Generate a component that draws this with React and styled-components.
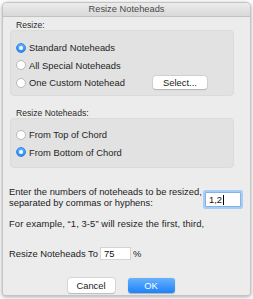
import React from "react";
import styled, { createGlobalStyle } from "styled-components";

const Global = createGlobalStyle`
  html, body {
    margin: 0;
    padding: 0;
    background: #ffffff;
  }
  body {
    font-family: "Liberation Sans", Arial, sans-serif;
    font-size: 9.4px;
    line-height: 11px;
    color: #222;
  }
`;

const Page = styled.div`
  width: 253px;
  height: 299px;
  padding: 2px 0 0 2px;
  box-sizing: border-box;
`;

const Window = styled.div`
  width: 249px;
  height: 294px;
  box-sizing: border-box;
  background: #ececec;
  border: 1px solid #c4c4c4;
  border-radius: 5px 5px 3px 3px;
  box-shadow: 0 1px 4px rgba(0, 0, 0, 0.35);
  display: flex;
  flex-direction: column;
  overflow: hidden;
`;

const TitleBar = styled.div`
  height: 13px;
  flex: none;
  background: linear-gradient(#ececec, #d8d8d8);
  border-bottom: 1px solid #c2c2c2;
  display: flex;
  align-items: center;
  justify-content: center;
  color: #4a4a4a;
  font-size: 9.3px;
`;

const Body = styled.div`
  padding: 0 16px 0 7px;
  display: flex;
  flex-direction: column;
`;

const GroupLabel = styled.div`
  font-size: 8.6px;
  color: #2a2a2a;
  margin: ${(p) => p.$top}px 0 0 6px;
  line-height: 10px;
`;

const Group = styled.div`
  height: ${(p) => p.$h}px;
  box-sizing: border-box;
  background: #e2e2e2;
  border: 1px solid #dbdbdb;
  border-radius: 4px;
  padding: ${(p) => p.$pad}px 0 0 5px;
  display: flex;
  flex-direction: column;
  gap: 6.5px;
`;

const Row = styled.div`
  display: flex;
  align-items: center;
  height: 11px;
`;

const Radio = styled.span`
  width: 10px;
  height: 10px;
  box-sizing: border-box;
  border-radius: 50%;
  flex: none;
  margin-right: 3px;
  display: flex;
  align-items: center;
  justify-content: center;
  background: ${(p) => (p.$on ? "linear-gradient(#5eaefd, #2a8bfb)" : "#fff")};
  border: 1px solid ${(p) => (p.$on ? "#2e86ec" : "#b9b9b9")};
  &::after {
    content: "";
    display: ${(p) => (p.$on ? "block" : "none")};
    width: 4px;
    height: 4px;
    border-radius: 50%;
    background: #fff;
  }
`;

const Label = styled.span`
  color: #1f1f1f;
  white-space: nowrap;
`;

const SmallButton = styled.div`
  margin-left: auto;
  margin-right: 26px;
  width: 54px;
  height: 13px;
  box-sizing: border-box;
  background: #fff;
  border-radius: 3px;
  box-shadow: 0 0 0 0.5px #c2c2c2, 0 0.5px 1px rgba(0, 0, 0, 0.25);
  display: flex;
  align-items: center;
  justify-content: center;
  color: #222;
`;

const Prompt = styled.div`
  margin: 18px 0 0 -1px;
  display: flex;
  align-items: flex-start;
`;

const PromptText = styled.div`
  white-space: nowrap;
`;

const Field = styled.div`
  width: ${(p) => p.$w}px;
  height: ${(p) => p.$h}px;
  box-sizing: border-box;
  background: #fff;
  border: 1px solid #d4d4d4;
  display: flex;
  align-items: center;
  padding-left: 3px;
  color: #111;
  flex: none;
`;

const FocusField = styled(Field)`
  margin-left: auto;
  margin-right: -7px;
  margin-top: 6px;
  border: 1px solid #86b3e6;
  box-shadow: 0 0 0 2px #a8cdf5;
  border-radius: 1px;
`;

const Caret = styled.span`
  display: inline-block;
  width: 1px;
  height: 10px;
  background: #000;
  margin-left: 0.5px;
`;

const Example = styled.div`
  margin: 10px 0 0 -1px;
  white-space: nowrap;
  letter-spacing: 0.1px;
`;

const SizeRow = styled.div`
  margin: 18px 0 0 -1px;
  display: flex;
  align-items: center;
  gap: 2px;
`;

const Buttons = styled.div`
  margin-top: 18px;
  display: flex;
  justify-content: center;
  gap: 13px;
  padding-right: 2px;
`;

const Button = styled.div`
  width: 47px;
  height: 15px;
  box-sizing: border-box;
  border-radius: 3px;
  display: flex;
  align-items: center;
  justify-content: center;
  background: ${(p) => (p.$primary ? "linear-gradient(#69b1fb, #1c83fb)" : "#fff")};
  color: ${(p) => (p.$primary ? "#fff" : "#222")};
  box-shadow: ${(p) =>
    p.$primary
      ? "0 0.5px 1px rgba(0,0,0,0.25)"
      : "0 0 0 0.5px #c6c6c6, 0 0.5px 1px rgba(0,0,0,0.25)"};
`;

const App = () => {
  return (
    <Page>
      <Global />
      <Window>
        <TitleBar>Resize Noteheads</TitleBar>
        <Body>
          <GroupLabel $top={3}>Resize:</GroupLabel>
          <Group $h={66} $pad={11}>
            <Row>
              <Radio $on />
              <Label>Standard Noteheads</Label>
            </Row>
            <Row>
              <Radio />
              <Label>All Special Noteheads</Label>
            </Row>
            <Row>
              <Radio />
              <Label>One Custom Notehead</Label>
              <SmallButton>Select...</SmallButton>
            </Row>
          </Group>
          <GroupLabel $top={12}>Resize Noteheads:</GroupLabel>
          <Group $h={50} $pad={10}>
            <Row>
              <Radio />
              <Label>From Top of Chord</Label>
            </Row>
            <Row>
              <Radio $on />
              <Label>From Bottom of Chord</Label>
            </Row>
          </Group>
          <Prompt>
            <PromptText>
              Enter the numbers of noteheads to be resized,
              <br />
              separated by commas or hyphens:
            </PromptText>
            <FocusField $w={36} $h={15}>
              1,2
              <Caret />
            </FocusField>
          </Prompt>
          <Example>For example, “1, 3-5” will resize the first, third,</Example>
          <SizeRow>
            <span>Resize Noteheads To</span>
            <Field $w={31} $h={13}>75</Field>
            <span>%</span>
          </SizeRow>
          <Buttons>
            <Button>Cancel</Button>
            <Button $primary>OK</Button>
          </Buttons>
        </Body>
      </Window>
    </Page>
  );
};

export default App;
